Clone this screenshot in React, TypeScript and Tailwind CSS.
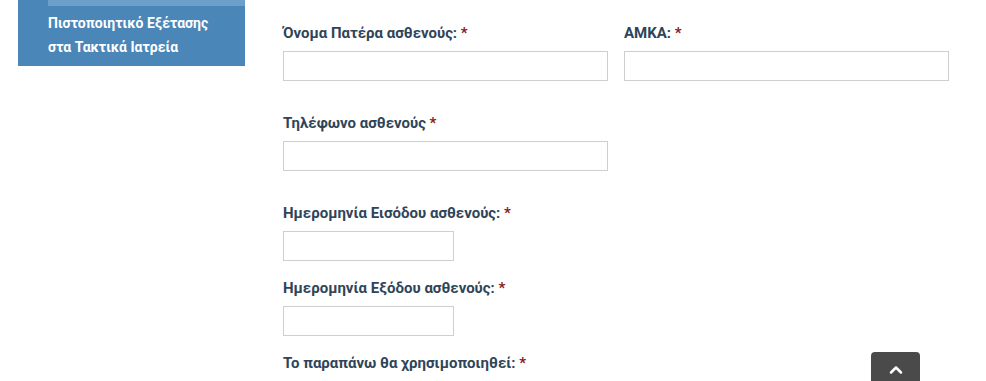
import { ChevronUp } from "lucide-react"

function Field({ label, colon = true, width = "w-[325px]" }: { label: string; colon?: boolean; width?: string }) {
  return (
    <div className="flex flex-col">
      <label className="h-5 text-[15px] leading-5 font-bold text-[#2f4458]">
        {label}
        {colon ? ":" : ""} <span className="text-[#8b1a1a]">*</span>
      </label>
      <input type="text" className={`mt-2 h-[30px] ${width} border border-[#cfcfcf] bg-white outline-none`} />
    </div>
  )
}

export default function App() {
  return (
    <div className="relative h-[381px] w-[986px] overflow-hidden bg-white font-['Roboto','Liberation_Sans',sans-serif]">
      <div className="flex items-start">
        {/* Sidebar */}
        <aside className="ml-[18px] w-[227px] bg-[#4a86b7]">
          <div className="ml-[30px] h-[6px] bg-[#6c9fc9]" />
          <div className="pb-[7px] pl-[30px] pt-[5px] text-[14px] font-bold leading-6 text-white">
            Πιστοποιητικό Εξέτασης
            <br />
            στα Τακτικά Ιατρεία
          </div>
        </aside>

        {/* Form */}
        <main className="ml-[38px] flex flex-col pt-[23px]">
          <div className="grid grid-cols-[325px_325px] gap-x-4">
            <Field label="Όνομα Πατέρα ασθενούς" />
            <Field label="ΑΜΚΑ" />
          </div>
          <div className="mt-8">
            <Field label="Τηλέφωνο ασθενούς" colon={false} />
          </div>
          <div className="mt-8">
            <Field label="Ημερομηνία Εισόδου ασθενούς" width="w-[171px]" />
          </div>
          <div className="mt-[17px]">
            <Field label="Ημερομηνία Εξόδου ασθενούς" width="w-[171px]" />
          </div>
          <div className="mt-[17px] h-5 text-[15px] font-bold leading-5 text-[#2f4458]">
            Το παραπάνω θα χρησιμοποιηθεί: <span className="text-[#8b1a1a]">*</span>
          </div>
        </main>
      </div>

      {/* Scroll to top */}
      <button className="absolute left-[871px] top-[352px] flex h-[40px] w-[49px] justify-center rounded-t-[4px] bg-[#4a4a4a] pt-[8px] text-white">
        <ChevronUp size={20} strokeWidth={3} />
      </button>
    </div>
  )
}
